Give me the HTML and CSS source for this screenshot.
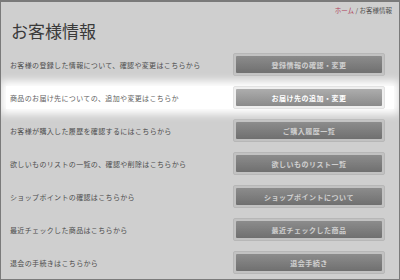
FILE: index.html
```html
<!DOCTYPE html>
<html lang="ja">
<head>
    <meta charset="utf-8">
    <meta name="viewport" content="width=device-width, initial-scale=1.0">
    <title>お客様情報</title>
    <link rel="stylesheet" href="styles.css">
</head>
<body>
    <div class="frame">
        <div class="breadcrumb"><a href="#">ホーム</a> / お客様情報</div>
        <h1>お客様情報</h1>
        <ul class="menu">
            <li class="row">
                <span class="desc">お客様の登録した情報について、確認や変更はこちらから</span>
                <span class="btn-wrap"><button type="button">登録情報の確認・変更</button></span>
            </li>
            <li class="row focus">
                <span class="desc">商品のお届け先についての、追加や変更はこちらか</span>
                <span class="btn-wrap"><button type="button">お届け先の追加・変更</button></span>
            </li>
            <li class="row">
                <span class="desc">お客様が購入した履歴を確認するにはこちらから</span>
                <span class="btn-wrap"><button type="button">ご購入履歴一覧</button></span>
            </li>
            <li class="row">
                <span class="desc">欲しいものリストの一覧の、確認や削除はこちらから</span>
                <span class="btn-wrap"><button type="button">欲しいものリスト一覧</button></span>
            </li>
            <li class="row">
                <span class="desc">ショップポイントの確認はこちらから</span>
                <span class="btn-wrap"><button type="button">ショップポイントについて</button></span>
            </li>
            <li class="row">
                <span class="desc">最近チェックした商品はこちらから</span>
                <span class="btn-wrap"><button type="button">最近チェックした商品</button></span>
            </li>
            <li class="row">
                <span class="desc">退会の手続きはこちらから</span>
                <span class="btn-wrap"><button type="button">退会手続き</button></span>
            </li>
        </ul>
        <div class="dim"></div>
    </div>
</body>
</html>
```

FILE: styles.css
```css
body {
    margin: 0;
    font-family: "Noto Sans CJK JP", "Noto Sans", sans-serif;
    background-color: #ffffff;
}

.frame {
    position: relative;
    height: 280px;
    border: 1px solid #7a7a7a;
    border-top-width: 2px;
    box-sizing: border-box;
    overflow: hidden;
    background-color: #ffffff;
}

.breadcrumb {
    text-align: right;
    padding: 3px 7px 0 0;
    font-size: 6.5px;
    line-height: 10px;
    color: #666666;
}

.breadcrumb a {
    color: #d94f70;
    text-decoration: none;
}

h1 {
    margin: 5px 0 0 10px;
    font-size: 17px;
    line-height: 22px;
    font-weight: normal;
    color: #484848;
}

.menu {
    list-style: none;
    margin: 11px 0 0 0;
    padding: 0;
    display: flex;
    flex-direction: column;
    gap: 10px;
}

.row {
    display: flex;
    align-items: center;
    justify-content: space-between;
    height: 23px;
    margin: 0 5px;
    padding: 0 9px 0 4px;
}

.desc {
    font-size: 7px;
    letter-spacing: 0.35px;
    color: #626262;
}

.btn-wrap {
    display: flex;
    width: 152px;
    height: 23px;
    box-sizing: border-box;
    padding: 2px;
    border: 1px solid #e2e2e2;
    border-radius: 2px;
    background-color: #efefef;
}

button {
    flex: 1;
    border: none;
    border-radius: 1px;
    background: linear-gradient(#adadad, #8a8a8a);
    color: #ffffff;
    font-family: inherit;
    font-size: 7px;
    font-weight: bold;
    letter-spacing: 0.5px;
    cursor: pointer;
}

.dim {
    position: absolute;
    inset: 0;
    background-color: rgba(0, 0, 0, 0.19);
    z-index: 1;
}

.focus {
    position: relative;
    z-index: 2;
    background-color: #ffffff;
    box-shadow: 0 0 8px 5px #ffffff;
}
```
